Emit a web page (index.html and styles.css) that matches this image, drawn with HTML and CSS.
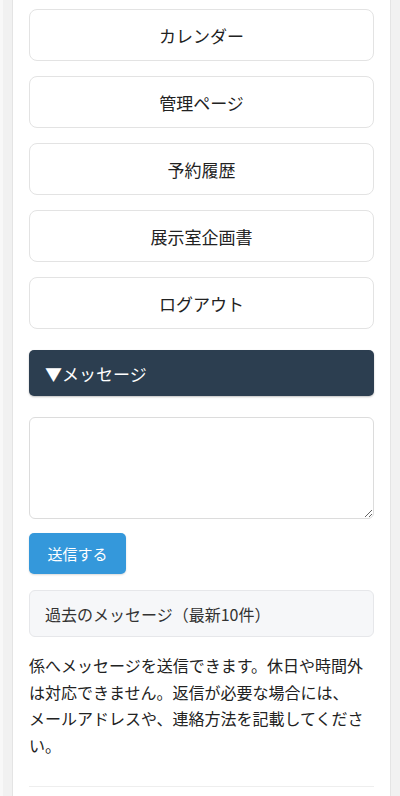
FILE: index.html
```html
<!DOCTYPE html>
<html lang="ja">
<head>
    <meta charset="UTF-8" />
    <meta name="viewport" content="width=device-width, initial-scale=1" />
    <title>メニュー</title>
    <link rel="stylesheet" href="styles.css">
</head>
<body>
    <div class="contenedor">
        <!-- Menú principal -->
        <nav class="menu">
            <a class="menu-boton" href="#">カレンダー</a>
            <a class="menu-boton" href="#">管理ページ</a>
            <a class="menu-boton" href="#">予約履歴</a>
            <a class="menu-boton" href="#">展示室企画書</a>
            <a class="menu-boton" href="#">ログアウト</a>
        </nav>

        <!-- Mensajes -->
        <div class="mensaje-titulo">▼メッセージ</div>
        <textarea class="mensaje-texto"></textarea>
        <button class="enviar">送信する</button>

        <div class="pasados">過去のメッセージ（最新10件）</div>

        <p class="aviso">
            係へメッセージを送信できます。休日や時間外は対応できません。返信が必要な場合には、メールアドレスや、連絡方法を記載してください。
        </p>

        <hr class="linea">
    </div>
</body>
</html>
```

FILE: styles.css
```css
body {
    margin: 0;
    padding: 0 9px 0 12px;
    background-color: #f1f1f1;
    font-family: "Noto Sans CJK JP", "Noto Sans", sans-serif;
    color: #333;
    border-left: 3px solid #f8f8f8;
    box-sizing: border-box;
    height: 796px;
    overflow: hidden;
}
.contenedor {
    background-color: #fff;
    border-left: 1px solid #e4e4e4;
    border-right: 1px solid #e4e4e4;
    padding: 9px 16px 0 16px;
    min-height: 796px;
    box-sizing: border-box;
    margin-left: -3px;
}
.menu {
    display: flex;
    flex-direction: column;
    gap: 15px;
}
.menu-boton {
    display: flex;
    align-items: center;
    justify-content: center;
    height: 52px;
    box-sizing: border-box;
    border: 1px solid #e3e3e3;
    border-radius: 8px;
    background-color: #fff;
    color: #222;
    font-size: 17px;
    text-decoration: none;
}
.mensaje-titulo {
    margin-top: 21px;
    height: 46px;
    box-sizing: border-box;
    background-color: #2c3e50;
    color: #fff;
    border-radius: 5px;
    padding: 0 16px;
    display: flex;
    align-items: center;
    font-size: 17px;
    box-shadow: 0 1px 2px rgba(0, 0, 0, 0.25);
}
.mensaje-texto {
    display: block;
    margin-top: 21px;
    width: 100%;
    height: 102px;
    box-sizing: border-box;
    border: 1px solid #dcdcdc;
    border-radius: 6px;
    padding: 8px;
    font-family: inherit;
    font-size: 16px;
}
.enviar {
    display: block;
    margin-top: 14px;
    width: 97px;
    height: 41px;
    background-color: #3498db;
    color: #fff;
    border: none;
    border-radius: 5px;
    font-family: inherit;
    font-size: 15px;
    box-shadow: 0 1px 2px rgba(0, 0, 0, 0.15);
}
.pasados {
    margin-top: 16px;
    height: 47px;
    box-sizing: border-box;
    background-color: #f6f7f9;
    border: 1px solid #e6e7ea;
    border-radius: 6px;
    padding: 0 15px;
    display: flex;
    align-items: center;
    font-size: 16px;
    color: #333;
}
.aviso {
    margin: 15px 0 0 0;
    font-size: 16px;
    line-height: 26.6px;
    color: #222;
    line-break: strict;
}
.linea {
    margin: 28px 0 0 0;
    border: none;
    border-top: 1px solid #eee;
}
```
